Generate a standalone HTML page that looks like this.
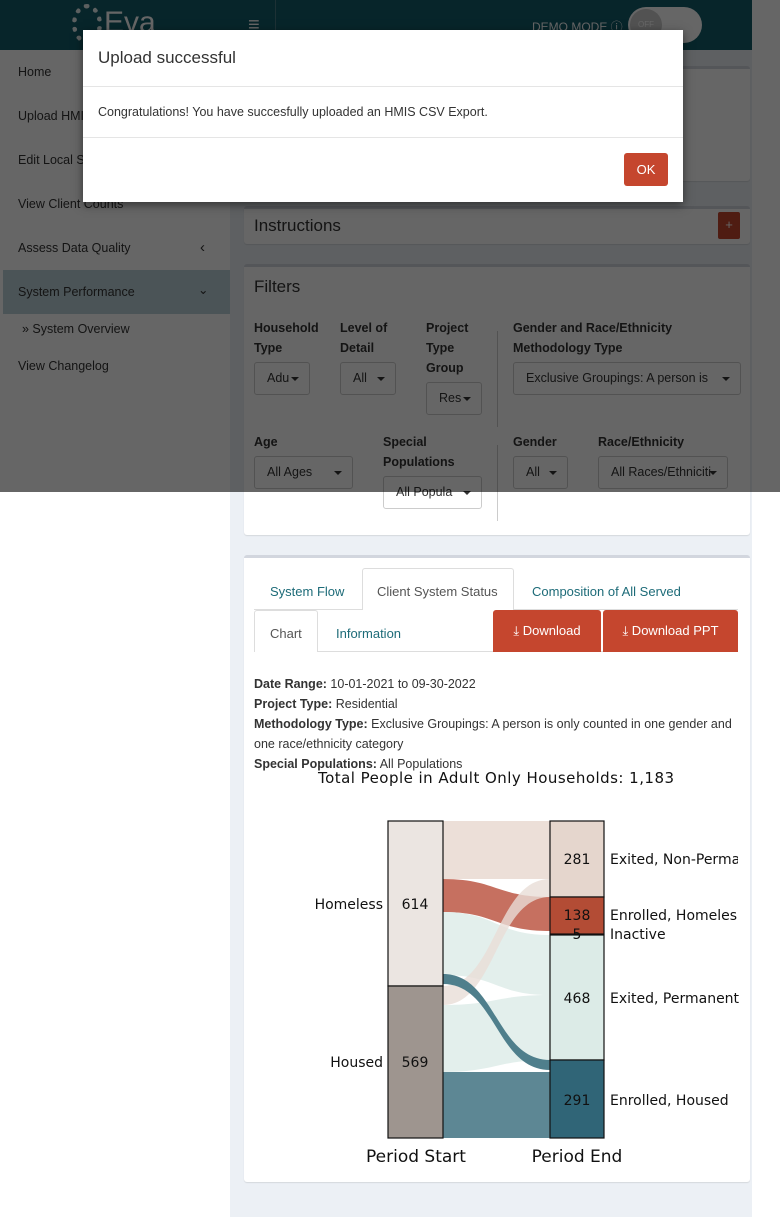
<!DOCTYPE html>
<html><head><meta charset="utf-8">
<style>
*{box-sizing:border-box;margin:0;padding:0}
body{width:780px;height:1217px;position:relative;overflow:hidden;background:#fff;font-family:"Liberation Sans",sans-serif;color:#333;font-size:13px}
.abs{position:absolute}
.hdr{left:0;top:0;width:752px;height:50px;background:#125c69}
.side{left:0;top:50px;width:230px;height:1167px;background:#fff}
.side div{position:absolute;left:18px;font-size:12.5px;color:#333}
.main{left:230px;top:50px;width:522px;height:1167px;background:#ecf0f5}
.box{position:absolute;left:244px;width:506px;background:#fff;border-top:3px solid #d2d6de;border-radius:3px;box-shadow:0 1px 1px rgba(0,0,0,.1)}
.lbl{position:absolute;font-weight:bold;font-size:12.5px;line-height:20px;color:#333}
.sel{position:absolute;height:33px;border:1px solid #ccc;border-radius:3px;background:#fff;font-size:12.5px;line-height:31px;padding-left:12px;overflow:hidden;white-space:nowrap}
.sel:after{content:"";position:absolute;right:10px;top:14px;border:4px solid transparent;border-top:4px solid #333;border-bottom:0}
.tab{position:absolute;font-size:13px;color:#1d6b78;line-height:20px}
.btn{position:absolute;background:#c5462e;color:#fff;font-size:13px;text-align:center;line-height:42px;border-radius:3px 3px 0 0}
.ov{left:0;top:0;width:780px;height:492px;background:rgba(0,0,0,.6)}
.modal{left:83px;top:30px;width:600px;height:172px;background:#fff;box-shadow:0 3px 9px rgba(0,0,0,.5)}
.info p{font-size:12.5px;line-height:20px}
</style></head><body>
<div class="abs hdr">
 <div class="abs" style="left:72px;top:4px;width:30px;height:40px;border-radius:50%;border:5px dotted #fff;opacity:.9"></div>
 <div class="abs" style="left:104px;top:6px;font-size:30px;color:#fff">Eva</div>
 <div class="abs" style="left:248px;top:14px;font-size:20px;color:#fff">≡</div>
 <div class="abs" style="left:275px;top:0;width:1px;height:50px;background:#4a7c85"></div>
 <div class="abs" style="left:532px;top:18px;font-size:12px;color:#fff">DEMO MODE ⓘ</div>
 <div class="abs" style="left:628px;top:7px;width:74px;height:36px;border-radius:18px;background:#fff"></div>
 <div class="abs" style="left:630px;top:9px;width:32px;height:32px;border-radius:16px;background:#ccc;font-size:8px;color:#fff;text-align:center;line-height:32px">OFF</div>
</div>
<div class="abs side">
 <div style="top:15px">Home</div>
 <div style="top:59px">Upload HMIS CSV Export</div>
 <div style="top:103px">Edit Local Settings</div>
 <div style="top:147px">View Client Counts</div>
 <div style="top:191px">Assess Data Quality</div>
 <div style="top:189px;left:200px;font-size:15px">‹</div>
 <div style="top:220px;left:3px;width:227px;height:44px;background:#bcd3da"></div>
 <div style="top:235px">System Performance</div>
 <div style="top:232px;left:198px">⌄</div>
 <div style="top:272px;left:22px">» System Overview</div>
 <div style="top:309px">View Changelog</div>
</div>
<div class="abs main"></div>
<div class="box" style="top:66px;height:115px"></div>
<div class="box" style="top:206px;height:38px"><div class="abs" style="left:10px;top:7px;font-size:17px">Instructions</div><div class="abs" style="left:474px;top:3px;width:22px;height:27px;background:#c5462e;color:#fff;text-align:center;line-height:26px;border-radius:2px">+</div></div>
<div class="box" style="top:264px;height:271px">
 <div class="abs" style="left:10px;top:10px;font-size:17px">Filters</div>
 <div class="lbl" style="left:10px;top:51px">Household<br>Type</div>
 <div class="sel" style="left:10px;top:95px;width:56px">Adu</div>
 <div class="lbl" style="left:96px;top:51px">Level of<br>Detail</div>
 <div class="sel" style="left:96px;top:95px;width:56px">All</div>
 <div class="lbl" style="left:182px;top:51px">Project<br>Type<br>Group</div>
 <div class="sel" style="left:182px;top:115px;width:56px">Res</div>
 <div class="abs" style="left:253px;top:64px;width:1px;height:96px;background:#ccc"></div>
 <div class="lbl" style="left:269px;top:51px">Gender and Race/Ethnicity<br>Methodology Type</div>
 <div class="sel" style="left:269px;top:95px;width:228px">Exclusive Groupings: A person is</div>
 <div class="lbl" style="left:10px;top:165px">Age</div>
 <div class="sel" style="left:10px;top:189px;width:99px">All Ages</div>
 <div class="lbl" style="left:139px;top:165px">Special<br>Populations</div>
 <div class="sel" style="left:139px;top:209px;width:99px">All Popula</div>
 <div class="abs" style="left:253px;top:178px;width:1px;height:76px;background:#ccc"></div>
 <div class="lbl" style="left:269px;top:165px">Gender</div>
 <div class="sel" style="left:269px;top:189px;width:55px">All</div>
 <div class="lbl" style="left:354px;top:165px">Race/Ethnicity</div>
 <div class="sel" style="left:354px;top:189px;width:130px">All Races/Ethniciti</div>
</div>
<div class="box" style="top:555px;height:627px">
 <div class="abs" style="left:10px;top:51px;width:484px;height:1px;background:#ddd"></div>
 <div class="tab" style="left:26px;top:24px">System Flow</div>
 <div class="abs" style="left:118px;top:10px;width:152px;height:42px;border:1px solid #ddd;border-bottom:none;background:#fff;border-radius:3px 3px 0 0"></div>
 <div class="tab" style="left:133px;top:24px;color:#555">Client System Status</div>
 <div class="tab" style="left:288px;top:24px">Composition of All Served</div>
 <div class="abs" style="left:10px;top:93px;width:484px;height:1px;background:#ddd"></div>
 <div class="abs" style="left:10px;top:52px;width:64px;height:42px;border:1px solid #ddd;border-bottom:none;background:#fff;border-radius:3px 3px 0 0"></div>
 <div class="tab" style="left:26px;top:66px;color:#555">Chart</div>
 <div class="tab" style="left:92px;top:66px">Information</div>
 <div class="btn" style="left:249px;top:52px;width:108px;height:42px">⤓ Download</div>
 <div class="btn" style="left:359px;top:52px;width:135px;height:42px">⤓ Download PPT</div>
 <div class="abs info" style="left:10px;top:116px;width:484px">
  <p><b>Date Range:</b> 10-01-2021 to 09-30-2022</p>
  <p><b>Project Type:</b> Residential</p>
  <p><b>Methodology Type:</b> Exclusive Groupings: A person is only counted in one gender and one race/ethnicity category</p>
  <p><b>Special Populations:</b> All Populations</p>
 </div>
</div>
<svg class="abs" style="left:0;top:0" width="780" height="1217" font-family="DejaVu Sans, sans-serif">
 <text x="496" y="783" font-size="15" text-anchor="middle" fill="#111" textLength="356">Total People in Adult Only Households: 1,183</text>
 <g stroke-width=".5">
 <path d="M443 821 L550 821 L550 879 L443 879Z" fill="#ecdfd8"/>
 <path d="M443 879 C496 879 496 897 550 897 L550 931 C496 931 496 912 443 912Z" fill="#c0604f" opacity=".9"/>
 <path d="M443 912 C496 912 496 935 550 935 L550 995 C496 995 496 975 443 975Z" fill="#e3efec"/>
 <path d="M443 986 C496 986 496 879 550 879 L550 897 C496 897 496 1005 443 1005Z" fill="#e9ddd7" opacity=".8"/>
 <path d="M443 1005 C496 1005 496 995 550 995 L550 1060 C496 1060 496 1072 443 1072Z" fill="#e3efec"/>
 <path d="M443 974 C496 974 496 1060 550 1060 L550 1070 C496 1070 496 984 443 984Z" fill="#4f7f8c"/>
 <path d="M443 1072 L550 1072 L550 1138 L443 1138Z" fill="#5d8794"/>
 </g>
 <g stroke="#111" stroke-width="1.2">
 <rect x="388" y="821" width="55" height="165" fill="#ebe5e1"/>
 <rect x="388" y="986" width="55" height="152" fill="#9e958f"/>
 <rect x="550" y="821" width="54" height="76" fill="#e5d6cd"/>
 <rect x="550" y="897" width="54" height="37" fill="#b34c35"/>
 <rect x="550" y="935" width="54" height="125" fill="#dcebe7"/>
 <rect x="550" y="1060" width="54" height="78" fill="#306577"/>
 </g>
 <g font-size="14" fill="#111">
 <text x="415" y="909" text-anchor="middle">614</text>
 <text x="415" y="1067" text-anchor="middle">569</text>
 <text x="577" y="864" text-anchor="middle">281</text>
 <text x="577" y="920" text-anchor="middle">138</text>
 <text x="577" y="939" text-anchor="middle">5</text>
 <text x="577" y="1003" text-anchor="middle">468</text>
 <text x="577" y="1105" text-anchor="middle">291</text>
 <text x="383" y="909" text-anchor="end">Homeless</text>
 <text x="383" y="1067" text-anchor="end">Housed</text>
 <text x="610" y="864">Exited, Non-Perma</text>
 <text x="610" y="920">Enrolled, Homeles</text>
 <text x="610" y="939">Inactive</text>
 <text x="610" y="1003">Exited, Permanent</text>
 <text x="610" y="1105">Enrolled, Housed</text>
 <text x="416" y="1162" text-anchor="middle" font-size="17">Period Start</text>
 <text x="577" y="1162" text-anchor="middle" font-size="17">Period End</text>
 </g>
 <rect x="738" y="840" width="12" height="120" fill="#fff"/>
</svg>
<div class="abs ov"></div>
<div class="abs modal">
 <div class="abs" style="left:15px;top:18px;font-size:17px;color:#333">Upload successful</div>
 <div class="abs" style="left:0;top:56px;width:600px;height:1px;background:#e5e5e5"></div>
 <div class="abs" style="left:15px;top:75px;font-size:12.5px">Congratulations! You have succesfully uploaded an HMIS CSV Export.</div>
 <div class="abs" style="left:0;top:107px;width:600px;height:1px;background:#e5e5e5"></div>
 <div class="abs" style="left:541px;top:123px;width:44px;height:33px;background:#c5462e;color:#fff;border-radius:3px;text-align:center;line-height:33px;font-size:13px">OK</div>
</div>
</body></html>
